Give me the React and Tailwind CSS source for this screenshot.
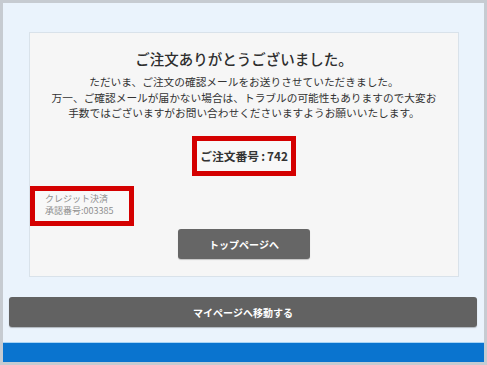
export default function App() {
  const font = { fontFamily: '"Noto Sans CJK JP", "Noto Sans", sans-serif' };
  return (
    <div
      className="w-[487px] h-[365px] border-[3px] border-[#c6cbd1] bg-[#eaf3fc] flex flex-col"
      style={font}
    >
      <div className="mt-[29px] ml-[26px] mr-[25px] h-[245px] border border-[#d9e2ea] bg-[#f6f6f6] flex flex-col items-center pt-[16px]">
        <div className="text-[14.5px] leading-[20px] font-medium text-[#2e2e2e]">
          ご注文ありがとうございました。
        </div>
        <div className="mt-[5px] text-[10.7px] leading-[15.7px] text-[#333] text-center whitespace-nowrap">
          ただいま、ご注文の確認メールをお送りさせていただきました。
          <br />
          万一、ご確認メールが届かない場合は、トラブルの可能性もありますので大変お
          <br />
          手数ではございますがお問い合わせくださいますようお願いいたします。
        </div>
        <div className="mt-[15px] w-[104px] h-[40px] border-[5px] border-[#d40000] bg-[#f8f8f8] flex items-center justify-center">
          <span className="text-[11.8px] font-bold text-[#333] leading-none">
            ご注文番号<span className="mx-[2px]">:</span>742
          </span>
        </div>
        <div className="self-start mt-[10px] w-[104px] h-[40px] border-[5px] border-[#d40000] bg-[#f8f8f8] pl-[10px] pt-[2px] text-[9px] leading-[12px] text-[#8f8f8f]">
          <div>クレジット決済</div>
          <div>承認番号:003385</div>
        </div>
        <button className="mt-[3px] w-[132px] h-[30px] rounded-[3px] bg-[#666666] text-white text-[10px] font-bold flex items-center justify-center shadow-[0_1px_1px_rgba(0,0,0,0.2)]">
          トップページへ
        </button>
      </div>
      <button className="mt-[20px] ml-[6px] mr-[7px] h-[30px] rounded-[3px] bg-[#626262] text-white text-[10px] font-bold flex items-center justify-center shadow-[0_1px_1px_rgba(0,0,0,0.25)]">
        マイページへ移動する
      </button>
      <div className="mt-[15px] h-[20px] bg-[#0a74cf] border-t border-[#a9d4f5]" />
    </div>
  );
}
